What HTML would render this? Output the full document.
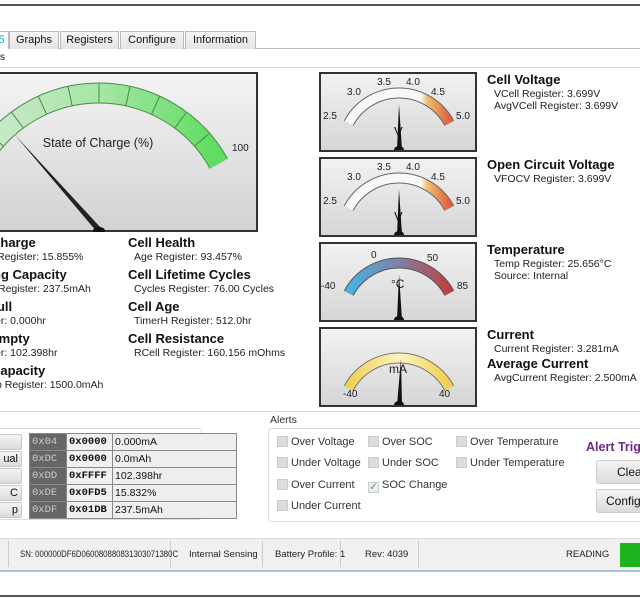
<!DOCTYPE html>
<html><head><meta charset="utf-8"><style>
*{margin:0;padding:0;box-sizing:border-box}
body{width:640px;height:599px;background:#fff;font-family:"Liberation Sans",sans-serif;position:relative;overflow:hidden;color:#111}
.a{position:absolute;white-space:nowrap}
.tab{position:absolute;top:31px;height:18px;border:1px solid #bbb;border-bottom:none;background:linear-gradient(#f6f6f6,#e4e4e4);font-size:11px;text-align:center;line-height:16px}
.h{position:absolute;font-size:13px;font-weight:bold;white-space:nowrap}
.s{position:absolute;font-size:10.5px;white-space:nowrap;color:#222}
.g{position:absolute;left:319px;width:158px;height:80px;border:2px solid #333;background:linear-gradient(#f2f2f2,#d6d6d6)}
.btn{position:absolute;left:-6px;width:28px;height:16px;background:linear-gradient(#f4f4f4,#dcdcdc);border:1px solid #c8c8c8;border-radius:2px;font-size:11px;text-align:right;padding-right:3px;line-height:14px}
table{position:absolute;left:29px;top:433px;border-collapse:collapse;font-size:10.5px}
td{border:1px solid #888;height:17px;padding:0 2px;background:#eee}
td.k{background:#666;color:#ccc;font-family:"Liberation Mono",monospace;width:37px}
td.m{font-family:"Liberation Mono",monospace;font-weight:bold;width:46px;background:#f0f0f0}
td.v{width:124px}
.cb{position:absolute;font-size:11px;color:#333;white-space:nowrap}
.cb i{display:inline-block;width:11px;height:11px;background:#ddd;border:1px solid #ccc;vertical-align:-2px;margin-right:3px}
.sep{position:absolute;top:541px;width:1px;height:26px;background:#ccc}
.st{position:absolute;top:549px;font-size:9.5px;color:#222;white-space:nowrap}
</style></head><body>
<div class="a" style="left:0;top:4px;width:640px;height:2px;background:#555"></div>
<div class="a" style="left:0;top:48px;width:640px;height:1px;background:#bbb"></div>
<div class="tab" style="left:-6px;width:15px;background:#fff;color:#1aa;">5</div>
<div class="tab" style="left:9px;width:50px">Graphs</div>
<div class="tab" style="left:60px;width:59px">Registers</div>
<div class="tab" style="left:120px;width:64px">Configure</div>
<div class="tab" style="left:185px;width:71px">Information</div>
<div class="a" style="left:0;top:52px;font-size:10px">s</div>
<div class="a" style="left:0;top:67px;width:640px;height:1px;background:#ddd"></div>

<svg class="a" style="left:0;top:72px" width="259" height="160">
<defs><linearGradient id="bg" x1="0" y1="0" x2="0" y2="1"><stop offset="0" stop-color="#f4f4f4"/><stop offset="1" stop-color="#d2d2d2"/></linearGradient>
<linearGradient id="gr" x1="0" y1="0" x2="1" y2="0"><stop offset="0" stop-color="#cfe8cf"/><stop offset="0.5" stop-color="#a6e6a6"/><stop offset="1" stop-color="#5fdc5f"/></linearGradient></defs>
<rect x="-2" y="1" width="259" height="158" fill="url(#bg)" stroke="#333" stroke-width="2"/>
<path d="M-20.8 91.6 A137 137 0 0 1 218.8 91.6" fill="none" stroke="#4a8a4a" stroke-width="21"/>
<path d="M-20.8 91.6 A137 137 0 0 1 218.8 91.6" fill="none" stroke="url(#gr)" stroke-width="19"/>
<g stroke="#4a8a4a" stroke-width="1">
<line x1="194.5" y1="74.3" x2="209.5" y2="61.1"/><line x1="174.7" y1="56" x2="186.6" y2="40"/><line x1="151.5" y1="42.3" x2="159.7" y2="24.1"/><line x1="125.8" y1="33.9" x2="130" y2="14.4"/><line x1="99" y1="31" x2="99" y2="11"/><line x1="72.2" y1="33.9" x2="68" y2="14.4"/><line x1="46.5" y1="42.3" x2="38.3" y2="24.1"/><line x1="23.3" y1="56" x2="11.4" y2="40"/><line x1="3.5" y1="74.3" x2="-11.5" y2="61.1"/></g>
<text x="98" y="75" font-size="12.5" text-anchor="middle" fill="#222">State of Charge (%)</text>
<text x="232" y="79" font-size="10" fill="#222">100</text>
<polygon points="15,63 101,156 97,160" fill="#222"/>
<ellipse cx="99" cy="159" rx="6" ry="4" fill="#111"/>
</svg>

<div class="h" style="left:-9px;top:235px">Charge</div><div class="s" style="left:-3px;top:251px">Register: 15.855%</div>
<div class="h" style="left:-7px;top:267px">ng Capacity</div><div class="s" style="left:-2px;top:283px">Register: 237.5mAh</div>
<div class="h" style="left:-11px;top:299px">Full</div><div class="s" style="left:-5px;top:315px">er: 0.000hr</div>
<div class="h" style="left:-10px;top:331px">Empty</div><div class="s" style="left:-5px;top:347px">er: 102.398hr</div>
<div class="h" style="left:-9px;top:363px">Capacity</div><div class="s" style="left:-4px;top:379px">p Register: 1500.0mAh</div>
<div class="h" style="left:128px;top:235px">Cell Health</div><div class="s" style="left:134px;top:251px">Age Register: 93.457%</div>
<div class="h" style="left:128px;top:267px">Cell Lifetime Cycles</div><div class="s" style="left:134px;top:283px">Cycles Register: 76.00 Cycles</div>
<div class="h" style="left:128px;top:299px">Cell Age</div><div class="s" style="left:134px;top:315px">TimerH Register: 512.0hr</div>
<div class="h" style="left:128px;top:331px">Cell Resistance</div><div class="s" style="left:134px;top:347px">RCell Register: 160.156 mOhms</div>

<svg width="0" height="0" style="position:absolute"><defs>
<linearGradient id="vo" x1="0" y1="0" x2="1" y2="0"><stop offset="0" stop-color="#f8f8f8"/><stop offset="0.72" stop-color="#f8f8f8"/><stop offset="0.78" stop-color="#f0c070"/><stop offset="1" stop-color="#e06040"/></linearGradient>
<linearGradient id="te" x1="0" y1="0" x2="1" y2="0"><stop offset="0" stop-color="#4ab0e0"/><stop offset="0.5" stop-color="#8080a8"/><stop offset="1" stop-color="#c04040"/></linearGradient>
<linearGradient id="cu" x1="0" y1="0" x2="1" y2="0"><stop offset="0" stop-color="#f0d050"/><stop offset="0.5" stop-color="#fbf3c0"/><stop offset="1" stop-color="#f0d050"/></linearGradient>
</defs></svg>

<div class="g" style="top:72px"><svg width="154" height="76" style="position:absolute;left:0;top:0">
<path d="M27.7 49.2 A57 57 0 0 1 128.3 49.2" fill="none" stroke="#666" stroke-width="11"/><path d="M27.7 49.2 A57 57 0 0 1 128.3 49.2" fill="none" stroke="url(#vo)" stroke-width="9"/>
<g font-size="10" fill="#222"><text x="2" y="45">2.5</text><text x="26" y="21">3.0</text><text x="56" y="11">3.5</text><text x="85" y="11">4.0</text><text x="110" y="21">4.5</text><text x="135" y="45">5.0</text><text x="73" y="62" font-size="13">V</text></g>
<polygon points="78,30 76,76 81,76" fill="#111"/><ellipse cx="78" cy="76" rx="5" ry="4" fill="#111"/></svg></div>
<div class="g" style="top:157px"><svg width="154" height="76" style="position:absolute;left:0;top:0">
<path d="M27.7 49.2 A57 57 0 0 1 128.3 49.2" fill="none" stroke="#666" stroke-width="11"/><path d="M27.7 49.2 A57 57 0 0 1 128.3 49.2" fill="none" stroke="url(#vo)" stroke-width="9"/>
<g font-size="10" fill="#222"><text x="2" y="45">2.5</text><text x="26" y="21">3.0</text><text x="56" y="11">3.5</text><text x="85" y="11">4.0</text><text x="110" y="21">4.5</text><text x="135" y="45">5.0</text><text x="73" y="62" font-size="13">V</text></g>
<polygon points="78,30 76,76 81,76" fill="#111"/><ellipse cx="78" cy="76" rx="5" ry="4" fill="#111"/></svg></div>
<div class="g" style="top:242px"><svg width="154" height="76" style="position:absolute;left:0;top:0">
<path d="M27.7 49.2 A57 57 0 0 1 128.3 49.2" fill="none" stroke="#555" stroke-width="11"/><path d="M27.7 49.2 A57 57 0 0 1 128.3 49.2" fill="none" stroke="url(#te)" stroke-width="9"/>
<g font-size="10" fill="#222"><text x="0" y="45">-40</text><text x="50" y="14">0</text><text x="106" y="17">50</text><text x="136" y="45">85</text><text x="70" y="44" font-size="12">°C</text></g>
<polygon points="78,30 76,76 81,76" fill="#111"/><ellipse cx="78" cy="76" rx="5" ry="4" fill="#111"/></svg></div>
<div class="g" style="top:327px"><svg width="154" height="76" style="position:absolute;left:0;top:0">
<path d="M27.7 59.2 A57 57 0 0 1 128.3 59.2" fill="none" stroke="#777" stroke-width="11"/><path d="M27.7 59.2 A57 57 0 0 1 128.3 59.2" fill="none" stroke="url(#cu)" stroke-width="9"/>
<g font-size="10" fill="#222"><text x="22" y="68">-40</text><text x="118" y="68">40</text><text x="68" y="44" font-size="12">mA</text></g>
<polygon points="80,30 76,76 81,76" fill="#111"/><ellipse cx="78" cy="76" rx="5" ry="4" fill="#111"/></svg></div>

<div class="h" style="left:487px;top:72px">Cell Voltage</div><div class="s" style="left:494px;top:88px">VCell Register: 3.699V</div><div class="s" style="left:494px;top:100px">AvgVCell Register: 3.699V</div>
<div class="h" style="left:487px;top:157px">Open Circuit Voltage</div><div class="s" style="left:494px;top:173px">VFOCV Register: 3.699V</div>
<div class="h" style="left:487px;top:242px">Temperature</div><div class="s" style="left:494px;top:258px">Temp Register: 25.656°C</div><div class="s" style="left:494px;top:270px">Source: Internal</div>
<div class="h" style="left:487px;top:327px">Current</div><div class="s" style="left:494px;top:343px">Current Register: 3.281mA</div>
<div class="h" style="left:487px;top:356px">Average Current</div><div class="s" style="left:494px;top:372px">AvgCurrent Register: 2.500mA</div>

<div class="a" style="left:0;top:411px;width:640px;height:1px;background:#ddd"></div>
<div class="a" style="left:-5px;top:428px;width:207px;height:92px;border:1px solid #ddd;border-radius:3px"></div>
<div class="btn" style="top:434px"></div><div class="btn" style="top:451px">ual</div><div class="btn" style="top:468px"></div><div class="btn" style="top:485px">C</div><div class="btn" style="top:502px">p</div>
<table>
<tr><td class="k">0x04</td><td class="m">0x0000</td><td class="v">0.000mA</td></tr>
<tr><td class="k">0xDC</td><td class="m">0x0000</td><td class="v">0.0mAh</td></tr>
<tr><td class="k">0xDD</td><td class="m">0xFFFF</td><td class="v">102.398hr</td></tr>
<tr><td class="k">0xDE</td><td class="m">0x0FD5</td><td class="v">15.832%</td></tr>
<tr><td class="k">0xDF</td><td class="m">0x01DB</td><td class="v">237.5mAh</td></tr>
</table>
<div class="a" style="left:270px;top:414px;font-size:10.5px;color:#333">Alerts</div>
<div class="a" style="left:268px;top:428px;width:380px;height:94px;border:1px solid #ddd;border-radius:3px"></div>
<div class="cb" style="left:277px;top:436px"><i></i>Over Voltage</div>
<div class="cb" style="left:277px;top:457px"><i></i>Under Voltage</div>
<div class="cb" style="left:277px;top:479px"><i></i>Over Current</div>
<div class="cb" style="left:277px;top:500px"><i></i>Under Current</div>
<div class="cb" style="left:368px;top:436px"><i></i>Over SOC</div>
<div class="cb" style="left:368px;top:457px"><i></i>Under SOC</div>
<div class="cb" style="left:368px;top:479px"><i style="background:#eee;color:#2aa;font-size:10px;line-height:9px;text-align:center;font-style:normal">✓</i>SOC Change</div>
<div class="cb" style="left:456px;top:436px"><i></i>Over Temperature</div>
<div class="cb" style="left:456px;top:457px"><i></i>Under Temperature</div>
<div class="a" style="left:586px;top:440px;font-size:12.5px;font-weight:bold;color:#6a2a8a">Alert Trig</div>
<div class="a" style="left:596px;top:460px;width:60px;height:24px;background:linear-gradient(#f4f4f4,#dcdcdc);border:1px solid #ccc;border-radius:3px;font-size:12px;line-height:22px;padding-left:20px">Clea</div>
<div class="a" style="left:596px;top:489px;width:60px;height:24px;background:linear-gradient(#f4f4f4,#dcdcdc);border:1px solid #ccc;border-radius:3px;font-size:12px;line-height:22px;padding-left:9px">Config</div>

<div class="a" style="left:0;top:538px;width:640px;height:34px;background:#f0f0f0;border-top:1px solid #ddd;border-bottom:2px solid #a8c0d8"></div>
<div class="sep" style="left:8px"></div><div class="sep" style="left:170px"></div><div class="sep" style="left:262px"></div><div class="sep" style="left:340px"></div><div class="sep" style="left:418px"></div>
<div class="st" style="left:20px;font-size:9.5px;top:549px;transform:scaleX(0.82);transform-origin:0 0">SN: 000000DF6D060080880831303071380C</div>
<div class="st" style="left:189px">Internal Sensing</div>
<div class="st" style="left:275px">Battery Profile: 1</div>
<div class="st" style="left:365px">Rev: 4039</div>
<div class="st" style="left:566px">READING</div>
<div class="a" style="left:620px;top:543px;width:22px;height:24px;background:#1db41d"></div>
<div class="a" style="left:0;top:595px;width:640px;height:2px;background:#555"></div>
</body></html>
